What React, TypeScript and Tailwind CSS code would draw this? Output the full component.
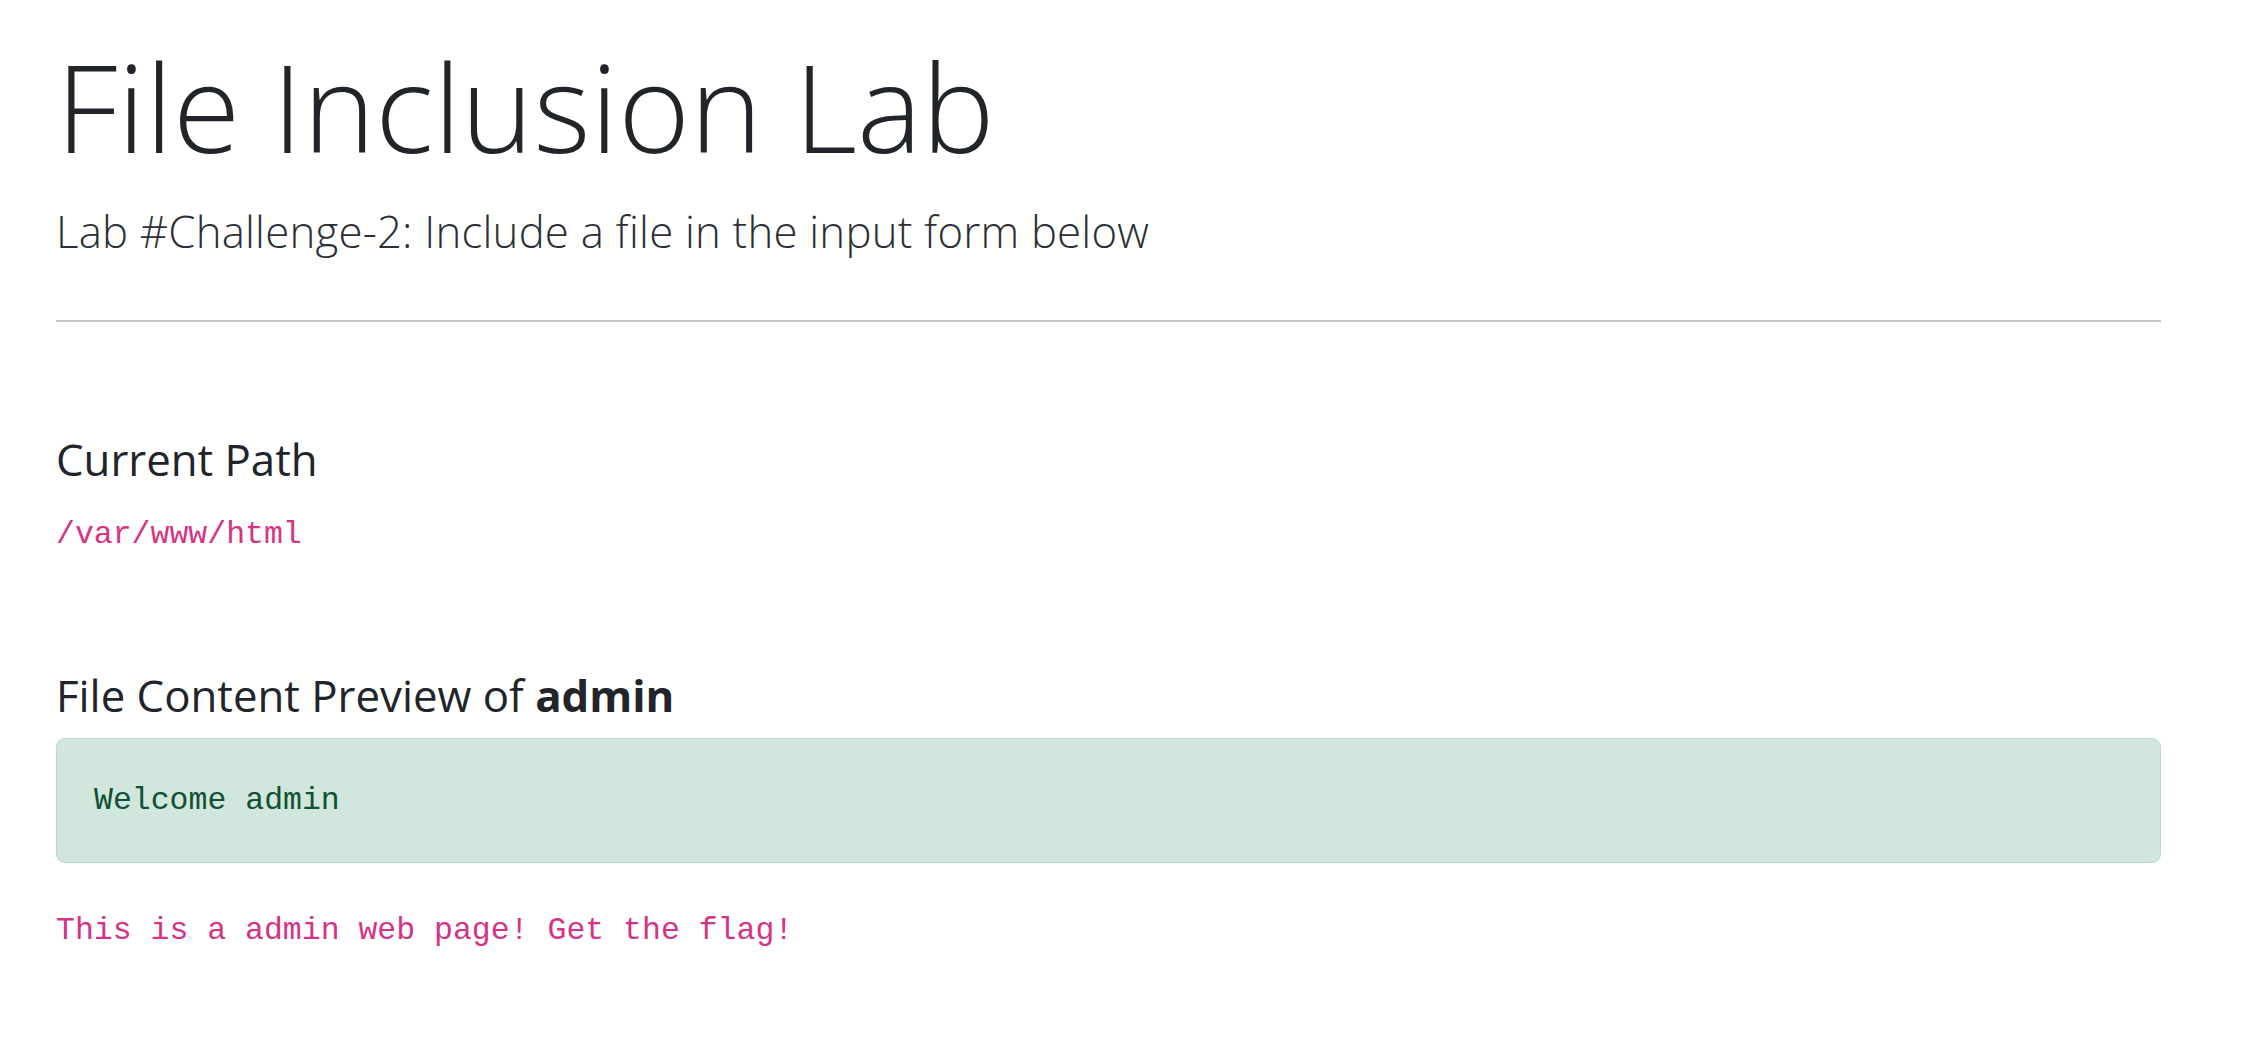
// File inclusion lab page
export default function App() {
  return (
    <div className="min-h-screen bg-white text-[#212529] font-['Open_Sans',sans-serif]">
      <div className="ml-[56px] w-[2105px] pt-[32px]">
        <h1 className="text-[122.5px] leading-[1.2] font-light">File Inclusion Lab</h1>
        <p className="mt-[20px] text-[43.75px] leading-[1.5] font-light tracking-[0.2px] text-[#2c3035]">
          Lab #Challenge-2: Include a file in the input form below
        </p>
        <hr className="mt-[55px] border-0 border-t-2 border-[#c6c6c6]" />

        <h5 className="mt-[111px] text-[43.75px] leading-[1.2] font-normal">Current Path</h5>
        <div className="mt-[27px] font-['Liberation_Mono',monospace] text-[31.5px] leading-[46px] text-[#d63384]">
          /var/www/html
        </div>

        <h5 className="mt-[111px] text-[43.75px] leading-[1.2] font-normal">
          File Content Preview of <b className="font-bold">admin</b>
        </h5>
        <div className="mt-[16px] rounded-[9px] border border-[#badbcc] bg-[#d1e7dd] pl-[37px] pr-[35px] pt-[31px] pb-[35px] text-[35px] leading-[52.5px] text-[#0f5132]">
          <code className="font-['Liberation_Mono',monospace] text-[31.5px]">Welcome admin</code>
        </div>
        <div className="mt-[45px] font-['Liberation_Mono',monospace] text-[31.5px] leading-[46px] text-[#d63384]">
          This is a admin web page! Get the flag!
        </div>
      </div>
    </div>
  );
}
